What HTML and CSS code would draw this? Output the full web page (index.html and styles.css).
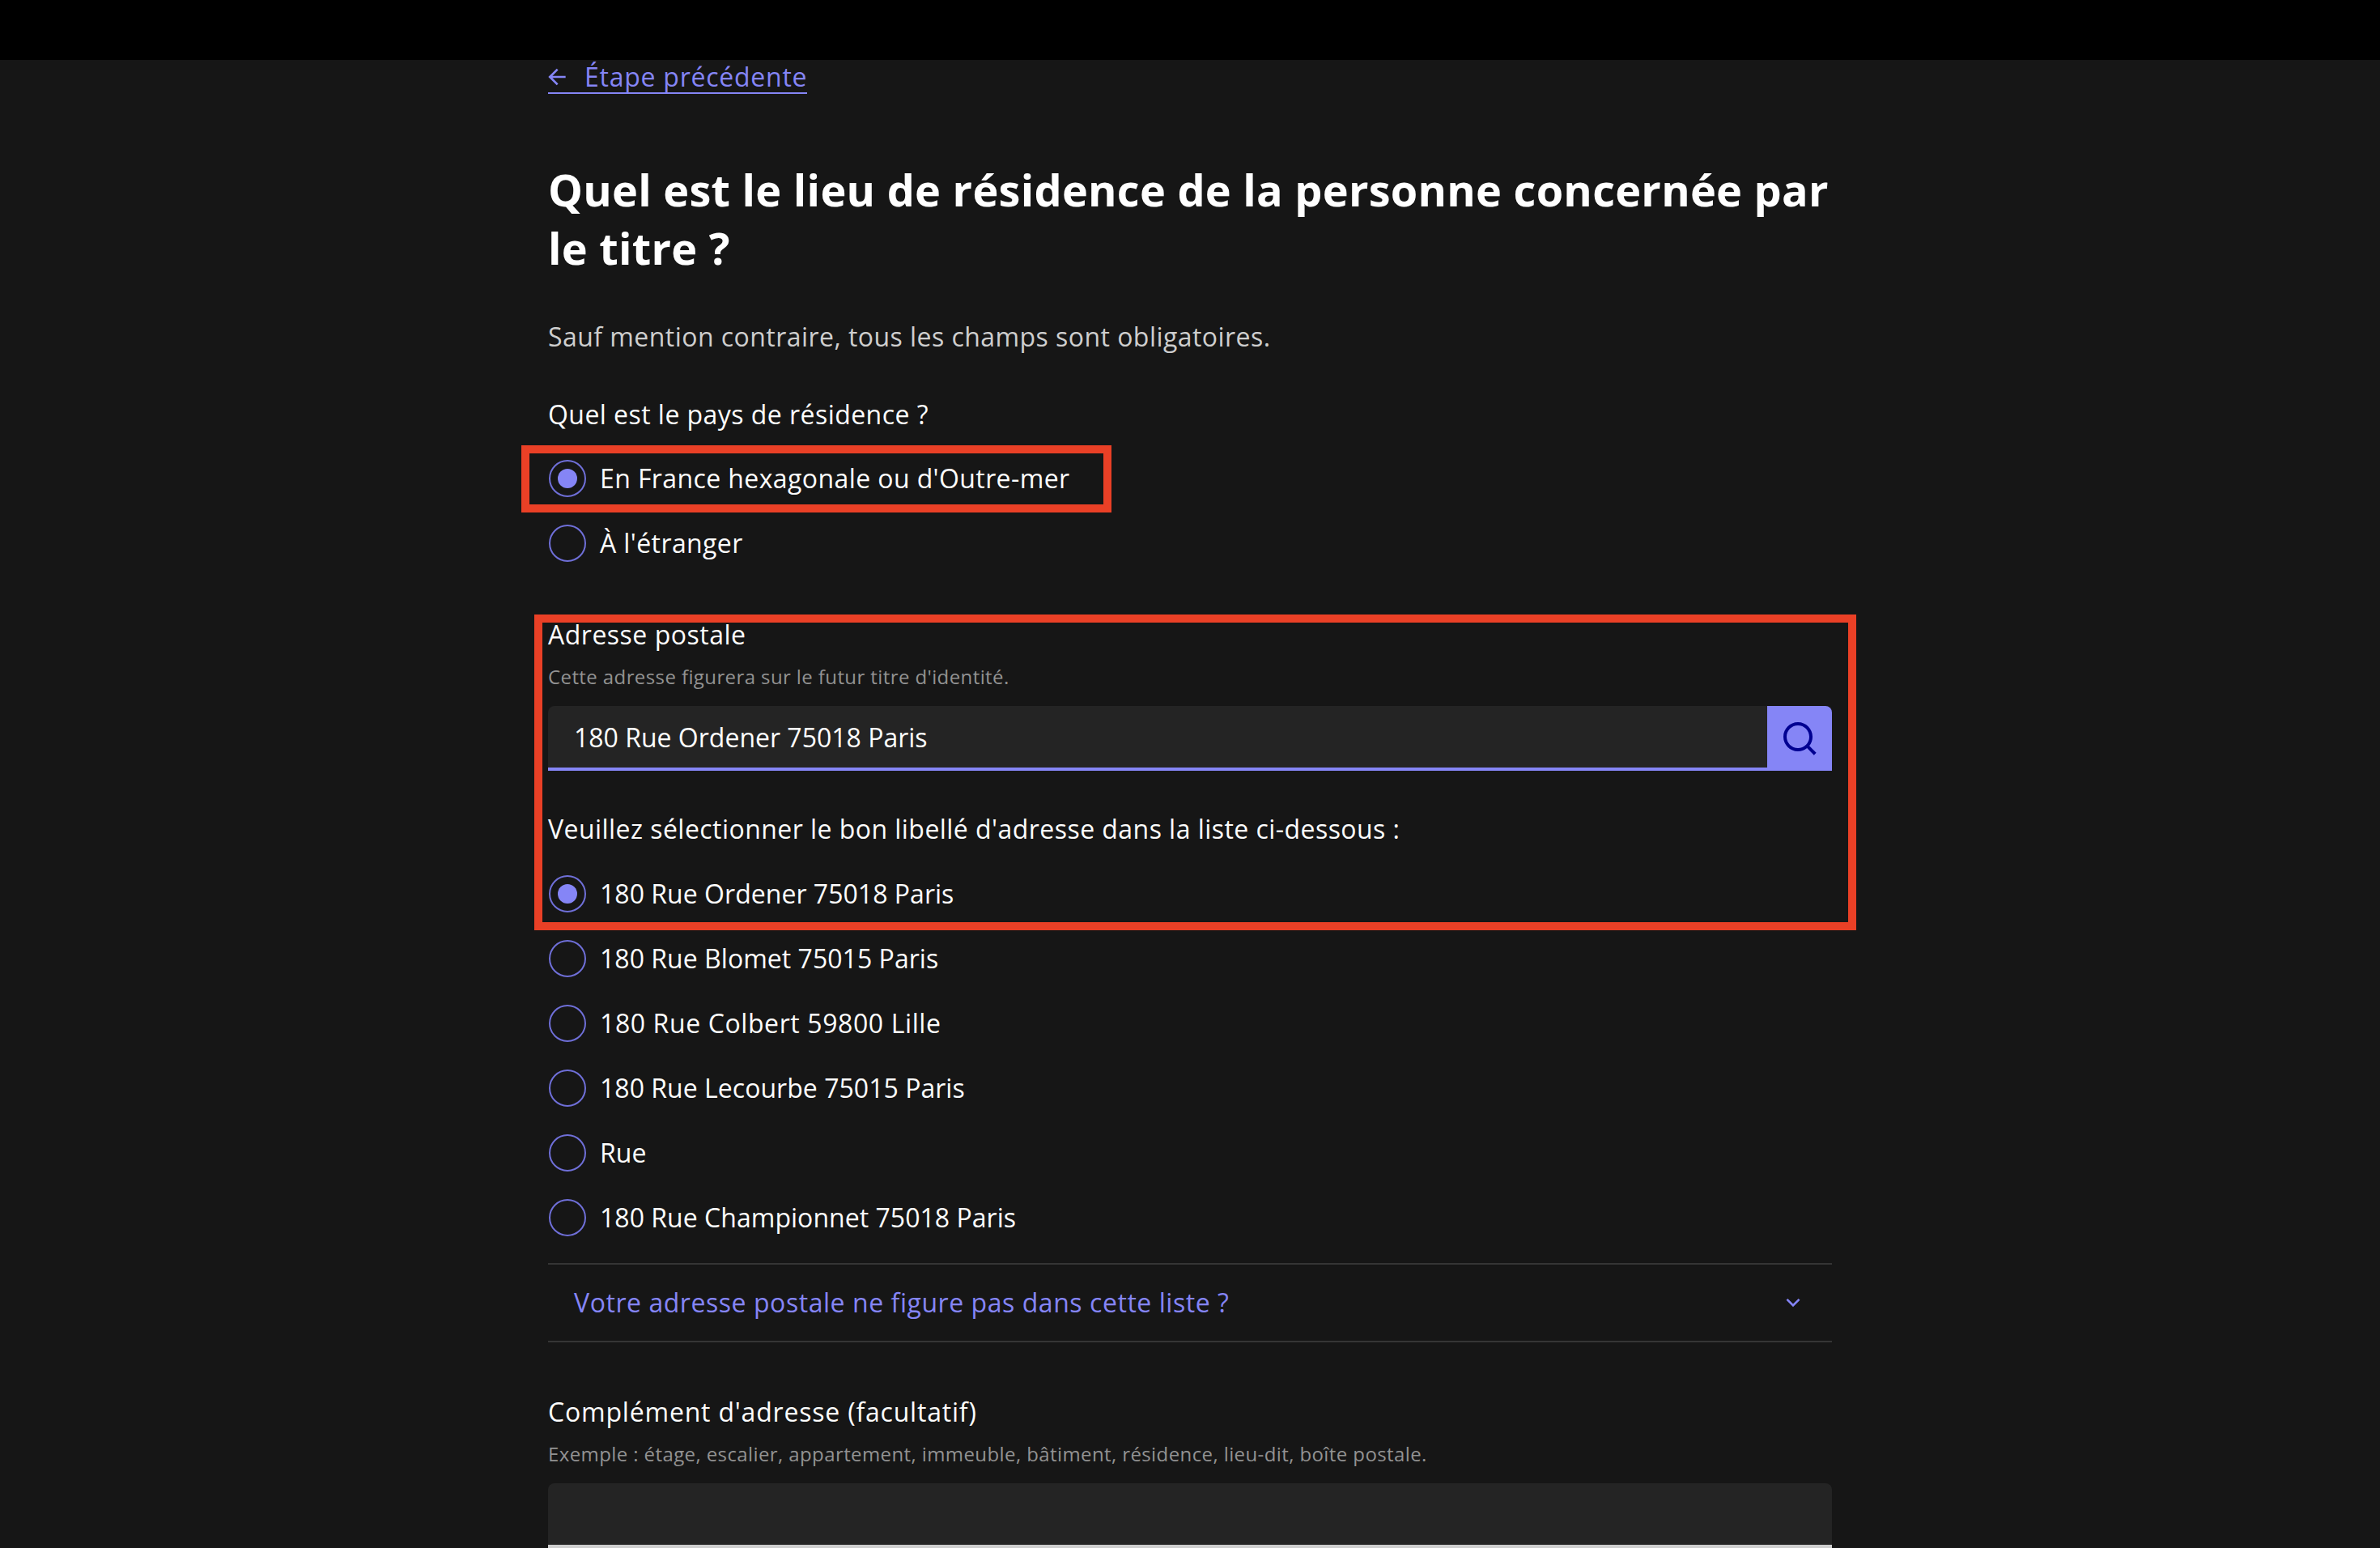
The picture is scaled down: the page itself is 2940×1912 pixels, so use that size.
FILE: index.html
```html
<!DOCTYPE html>
<html lang="fr">
<head>
  <meta charset="UTF-8">
  <title>Lieu de résidence</title>
  <link rel="stylesheet" href="styles.css">
</head>
<body>
  <div class="top-bar"></div>

  <main class="page">
    <a class="back-link" href="#">
      <svg class="back-icon" viewBox="0 0 24 24"><path d="M7.828 11H20v2H7.828l5.364 5.364-1.414 1.414L4 12l7.778-7.778 1.414 1.414z"/></svg>
      <span class="back-text">Étape précédente</span>
    </a>

    <h1>Quel est le lieu de résidence de la personne concernée par le titre ?</h1>
    <p class="mention">Sauf mention contraire, tous les champs sont obligatoires.</p>

    <!-- Country -->
    <p class="legend">Quel est le pays de résidence ?</p>
    <div class="radios country">
      <div class="radio checked"><span class="dot"></span><span>En France hexagonale ou d'Outre-mer</span></div>
      <div class="radio"><span class="dot"></span><span>À l'étranger</span></div>
    </div>

    <!-- Address -->
    <p class="label address-label">Adresse postale</p>
    <p class="hint">Cette adresse figurera sur le futur titre d'identité.</p>
    <div class="search">
      <div class="search-input">180 Rue Ordener 75018 Paris</div>
      <button class="search-btn">
        <svg viewBox="0 0 24 24"><path d="M18.031 16.617l4.283 4.282-1.415 1.415-4.282-4.283A8.96 8.96 0 0 1 11 20c-4.968 0-9-4.032-9-9s4.032-9 9-9 9 4.032 9 9a8.96 8.96 0 0 1-1.969 5.617zm-2.006-.742A6.977 6.977 0 0 0 18 11c0-3.868-3.133-7-7-7-3.868 0-7 3.132-7 7 0 3.867 3.132 7 7 7a6.977 6.977 0 0 0 4.875-1.975l.15-.15z"/></svg>
      </button>
    </div>

    <p class="legend pick">Veuillez sélectionner le bon libellé d'adresse dans la liste ci-dessous :</p>
    <div class="radios results">
      <div class="radio checked"><span class="dot"></span><span>180 Rue Ordener 75018 Paris</span></div>
      <div class="radio"><span class="dot"></span><span>180 Rue Blomet 75015 Paris</span></div>
      <div class="radio wide"><span class="dot"></span><span>180 Rue Colbert 59800 Lille</span></div>
      <div class="radio"><span class="dot"></span><span>180 Rue Lecourbe 75015 Paris</span></div>
      <div class="radio"><span class="dot"></span><span>Rue</span></div>
      <div class="radio"><span class="dot"></span><span>180 Rue Championnet 75018 Paris</span></div>
    </div>

    <div class="accordion">
      <span>Votre adresse postale ne figure pas dans cette liste ?</span>
      <svg viewBox="0 0 24 24"><path d="M12 13.172l4.95-4.95 1.414 1.414L12 16 5.636 9.636 7.05 8.222z"/></svg>
    </div>

    <!-- Complement -->
    <p class="label extra-label">Complément d'adresse (facultatif)</p>
    <p class="hint extra-hint">Exemple : étage, escalier, appartement, immeuble, bâtiment, résidence, lieu-dit, boîte postale.</p>
    <div class="text-input"></div>
  </main>

  <!-- Red annotation frames drawn over the screenshot -->
  <div class="frame frame-country"></div>
  <div class="frame frame-address"></div>
</body>
</html>
```

FILE: styles.css
```css
/* Reset and body style */
html, body {
  margin: 0;
  padding: 0;
  height: 1912px;
  overflow: hidden;
  background-color: #161616;
  color: #fdfdfd;
  font-family: "Open Sans", Lato, sans-serif;
}

p, h1 {
  margin: 0;
}

.top-bar {
  height: 74px;
  background-color: #000;
}

.page {
  width: 1586px;
  margin-left: 677px;
  font-size: 32px;
  line-height: 48px;
  letter-spacing: 0.45px;
}

/* Back link */
.back-link {
  display: flex;
  align-items: center;
  box-sizing: border-box;
  width: 320px;
  height: 42px;
  padding-top: 2px;
  border-bottom: 2px solid #8585f6;
  color: #8585f6;
  text-decoration: none;
  white-space: nowrap;
  line-height: 38px;
  letter-spacing: 0.75px;
}

.back-icon {
  flex: none;
  width: 32px;
  height: 32px;
  margin-left: -5px;
  margin-right: 18px;
  fill: #8585f6;
}

h1 {
  margin-top: 82px;
  font-size: 54px;
  line-height: 72px;
  font-weight: 700;
  letter-spacing: 0.28px;
  color: #fff;
}

.mention {
  margin-top: 50px;
  color: #cecece;
}

.legend {
  margin-top: 48px;
}

/* Radios */
.radios {
  display: flex;
  flex-direction: column;
  gap: 32px;
}

.country {
  margin-top: 31px;
  letter-spacing: 0.4px;
}

.results {
  margin-top: 32px;
  letter-spacing: 0.03px;
}

.radio {
  display: flex;
  align-items: center;
  gap: 16px;
  height: 48px;
}

.radio.wide {
  letter-spacing: 0.6px;
}

.dot {
  flex: none;
  box-sizing: border-box;
  width: 46px;
  height: 46px;
  margin: 0 1px;
  border: 2.5px solid #6f6fd8;
  border-radius: 50%;
  display: flex;
  align-items: center;
  justify-content: center;
}

.checked .dot::after {
  content: "";
  width: 24px;
  height: 24px;
  border-radius: 50%;
  background-color: #8585f6;
}

/* Address field */
.address-label {
  margin-top: 65px;
  letter-spacing: 0.5px;
}

.hint {
  margin-top: 8px;
  font-size: 24px;
  line-height: 40px;
  letter-spacing: 0.4px;
  color: #929292;
}

.search {
  display: flex;
  height: 80px;
  margin-top: 16px;
}

.search-input {
  flex: 1;
  box-sizing: border-box;
  padding: 0 32px;
  line-height: 78px;
  letter-spacing: 0;
  background-color: #242424;
  border-bottom: 4px solid #8585f6;
  border-radius: 8px 0 0 0;
}

.search-btn {
  width: 80px;
  height: 80px;
  padding: 0;
  border: 0;
  border-radius: 0 8px 0 0;
  background-color: #8585f6;
  display: flex;
  align-items: center;
  justify-content: center;
}

.search-btn svg {
  width: 48px;
  height: 48px;
  fill: #000091;
}

/* Accordion */
.accordion {
  display: flex;
  align-items: center;
  justify-content: space-between;
  box-sizing: border-box;
  height: 98px;
  margin-top: 32px;
  padding: 0 32px;
  border-top: 2px solid #353535;
  border-bottom: 2px solid #353535;
  color: #8585f6;
  letter-spacing: 0.55px;
}

.accordion svg {
  width: 32px;
  height: 32px;
  fill: #8585f6;
}

.extra-label {
  margin-top: 62px;
  letter-spacing: 0.8px;
}

.extra-hint {
  margin-top: 8px;
}

.text-input {
  box-sizing: border-box;
  height: 80px;
  margin-top: 16px;
  background-color: #242424;
  border-bottom: 4px solid #cecece;
  border-radius: 8px 8px 0 0;
}

/* Annotation frames */
.frame {
  position: absolute;
  box-sizing: border-box;
  border: 10px solid #ea4026;
}

.frame-country {
  left: 644px;
  top: 550px;
  width: 729px;
  height: 83px;
}

.frame-address {
  left: 660px;
  top: 759px;
  width: 1633px;
  height: 390px;
}
```
